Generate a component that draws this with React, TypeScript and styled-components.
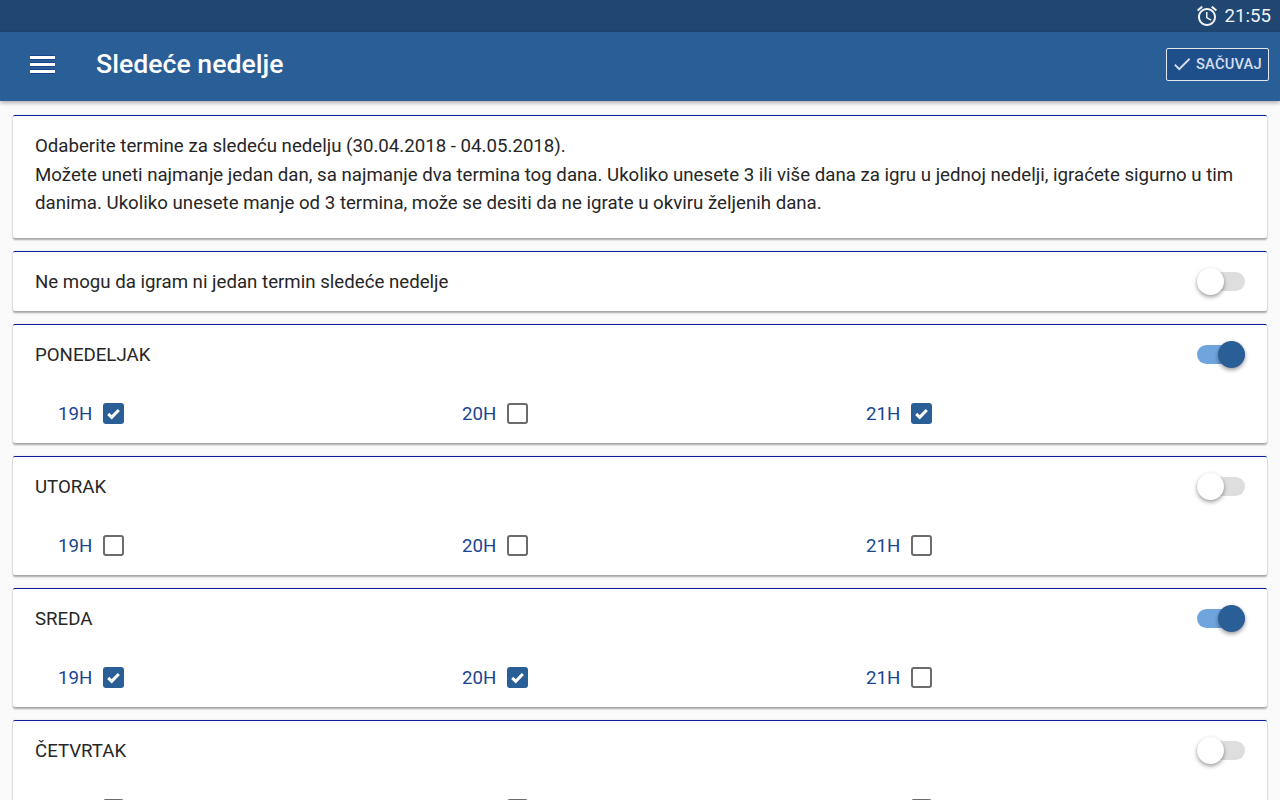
import React from 'react';
import styled, { createGlobalStyle } from 'styled-components';

const GlobalStyle = createGlobalStyle`
  html, body {
    margin: 0;
    padding: 0;
    height: 100%;
    overflow: hidden;
    background: #fafafa;
  }
  * {
    box-sizing: border-box;
  }
  #root {
    font-family: Roboto, "Liberation Sans", sans-serif;
  }
`;

const Screen = styled.div`
  width: 1280px;
  height: 800px;
  overflow: hidden;
  display: flex;
  flex-direction: column;
`;

const StatusBar = styled.div`
  height: 32px;
  flex: none;
  background: #204672;
  color: #f1f4f7;
  display: flex;
  justify-content: flex-end;
  align-items: center;
  padding-right: 9px;
  gap: 6px;
  font-size: 18.67px;
`;

const Toolbar = styled.header`
  height: 69px;
  flex: none;
  background: #295e97;
  display: flex;
  align-items: center;
  padding: 0 11px 5px 30px;
  box-shadow: 0 2px 4px rgba(0, 0, 0, 0.3);
  position: relative;
`;

const MenuIcon = styled.div`
  width: 25px;
  display: flex;
  flex-direction: column;
  gap: 4px;
  margin-right: 41px;
`;

const MenuLine = styled.span`
  display: block;
  height: 3px;
  background: #fff;
  box-shadow: 0 0.5px 0 #0b2a86, 0 -0.5px 0 #0b2a86;
`;

const Title = styled.h1`
  margin: 0;
  flex: 1;
  color: #fff;
  font-size: 26.67px;
  font-weight: 500;
  line-height: 32px;
`;

const SaveButton = styled.button`
  width: 103px;
  height: 33px;
  padding: 0 0 0 4px;
  display: flex;
  align-items: center;
  gap: 3px;
  background: #1f4f8a;
  border: 1px solid #e3e9f0;
  border-radius: 2px;
  color: #d5deea;
  font-family: inherit;
  font-size: 14.67px;
  font-weight: 500;
  letter-spacing: 0.2px;
`;

const Content = styled.main`
  flex: 1;
  padding: 14px 13px 0;
  display: flex;
  flex-direction: column;
  gap: 13px;
`;

const Card = styled.section`
  flex: none;
  background: #fff;
  border-top: 1px solid #0a1f9a;
  border-radius: 2px;
  box-shadow: 0 2px 2px rgba(0, 0, 0, 0.32), 0 0 2px rgba(0, 0, 0, 0.14);
`;

const Intro = styled.p`
  margin: 0;
  padding: 16px 22px 20px;
  height: 122px;
  color: #262626;
  font-size: 18.67px;
  line-height: 28.5px;
`;

const Row = styled.div`
  height: 59px;
  padding: 0 22px;
  display: flex;
  justify-content: space-between;
  align-items: center;
  color: #262626;
  font-size: 18.67px;
`;

const Track = styled.div<{ $on?: boolean }>`
  width: 48px;
  height: 19px;
  border-radius: 10px;
  background: ${p => (p.$on ? '#6fa5dd' : '#dedede')};
  position: relative;
`;

const Knob = styled.span<{ $on?: boolean }>`
  position: absolute;
  top: -4px;
  left: ${p => (p.$on ? '21px' : '0')};
  width: 27px;
  height: 27px;
  border-radius: 50%;
  background: ${p => (p.$on ? '#295e97' : '#fff')};
  box-shadow: 0 2px 4px rgba(0, 0, 0, 0.4);
`;

const Slots = styled.div`
  height: 59px;
  padding: 0 0 0 45px;
  display: grid;
  grid-template-columns: repeat(3, 404px);
  align-items: center;
`;

const Slot = styled.label`
  display: flex;
  align-items: center;
  height: 21px;
  color: #1a4590;
  font-size: 18.67px;
  gap: 11px;
`;

const Box = styled.span<{ $checked?: boolean }>`
  width: 21px;
  height: 21px;
  border-radius: 3px;
  border: ${p => (p.$checked ? 'none' : '2px solid #6b6b6b')};
  background: ${p => (p.$checked ? '#295e97' : '#fff')};
  display: flex;
  align-items: center;
  justify-content: center;
`;

const hours = ['19H', '20H', '21H'];

const days = [
  { name: 'PONEDELJAK', on: true, checked: [true, false, true] },
  { name: 'UTORAK', on: false, checked: [false, false, false] },
  { name: 'SREDA', on: true, checked: [true, true, false] },
  { name: 'ČETVRTAK', on: false, checked: [false, false, false] },
];

const Toggle = ({ on }: { on?: boolean }) => (
  <Track $on={on}>
    <Knob $on={on} />
  </Track>
);

const App = () => (
  <Screen>
    <GlobalStyle />
    <StatusBar>
      <svg width="24" height="24" viewBox="0 0 24 24" fill="#f1f4f7">
        <path d="M22 5.72l-4.6-3.86-1.29 1.53 4.6 3.86L22 5.72zM7.88 3.39L6.6 1.86 2 5.71l1.29 1.53 4.59-3.85zM12.5 8H11v6l4.75 2.85.75-1.23-4-2.37V8zM12 4c-4.97 0-9 4.03-9 9s4.03 9 9 9 9-4.03 9-9-4.03-9-9-9zm0 16c-3.87 0-7-3.13-7-7s3.13-7 7-7 7 3.13 7 7-3.13 7-7 7z" />
      </svg>
      <span>21:55</span>
    </StatusBar>
    <Toolbar>
      <MenuIcon>
        <MenuLine />
        <MenuLine />
        <MenuLine />
      </MenuIcon>
      <Title>Sledeće nedelje</Title>
      <SaveButton>
        <svg width="22" height="22" viewBox="0 0 24 24" fill="#d5deea">
          <path d="M9 16.17L4.83 12l-1.42 1.41L9 19 21 7l-1.41-1.41z" />
        </svg>
        SAČUVAJ
      </SaveButton>
    </Toolbar>
    <Content>
      <Card>
        <Intro>
          Odaberite termine za sledeću nedelju (30.04.2018 - 04.05.2018).
          <br />
          Možete uneti najmanje jedan dan, sa najmanje dva termina tog dana. Ukoliko unesete 3 ili više dana za igru u jednoj nedelji, igraćete sigurno u tim danima. Ukoliko unesete manje od 3 termina, može se desiti da ne igrate u okviru željenih dana.
        </Intro>
      </Card>
      <Card>
        <Row>
          Ne mogu da igram ni jedan termin sledeće nedelje
          <Toggle />
        </Row>
      </Card>
      {days.map(day => (
        <Card key={day.name}>
          <Row>
            {day.name}
            <Toggle on={day.on} />
          </Row>
          <Slots>
            {hours.map((hour, index) => (
              <Slot key={hour}>
                {hour}
                <Box $checked={day.checked[index]}>
                  {day.checked[index] && (
                    <svg width="17" height="17" viewBox="0 0 24 24" fill="none" stroke="#fff" strokeWidth="4.2">
                      <path d="M4.5 12.5l5 5L19.5 7" />
                    </svg>
                  )}
                </Box>
              </Slot>
            ))}
          </Slots>
        </Card>
      ))}
    </Content>
  </Screen>
);

export default App;
